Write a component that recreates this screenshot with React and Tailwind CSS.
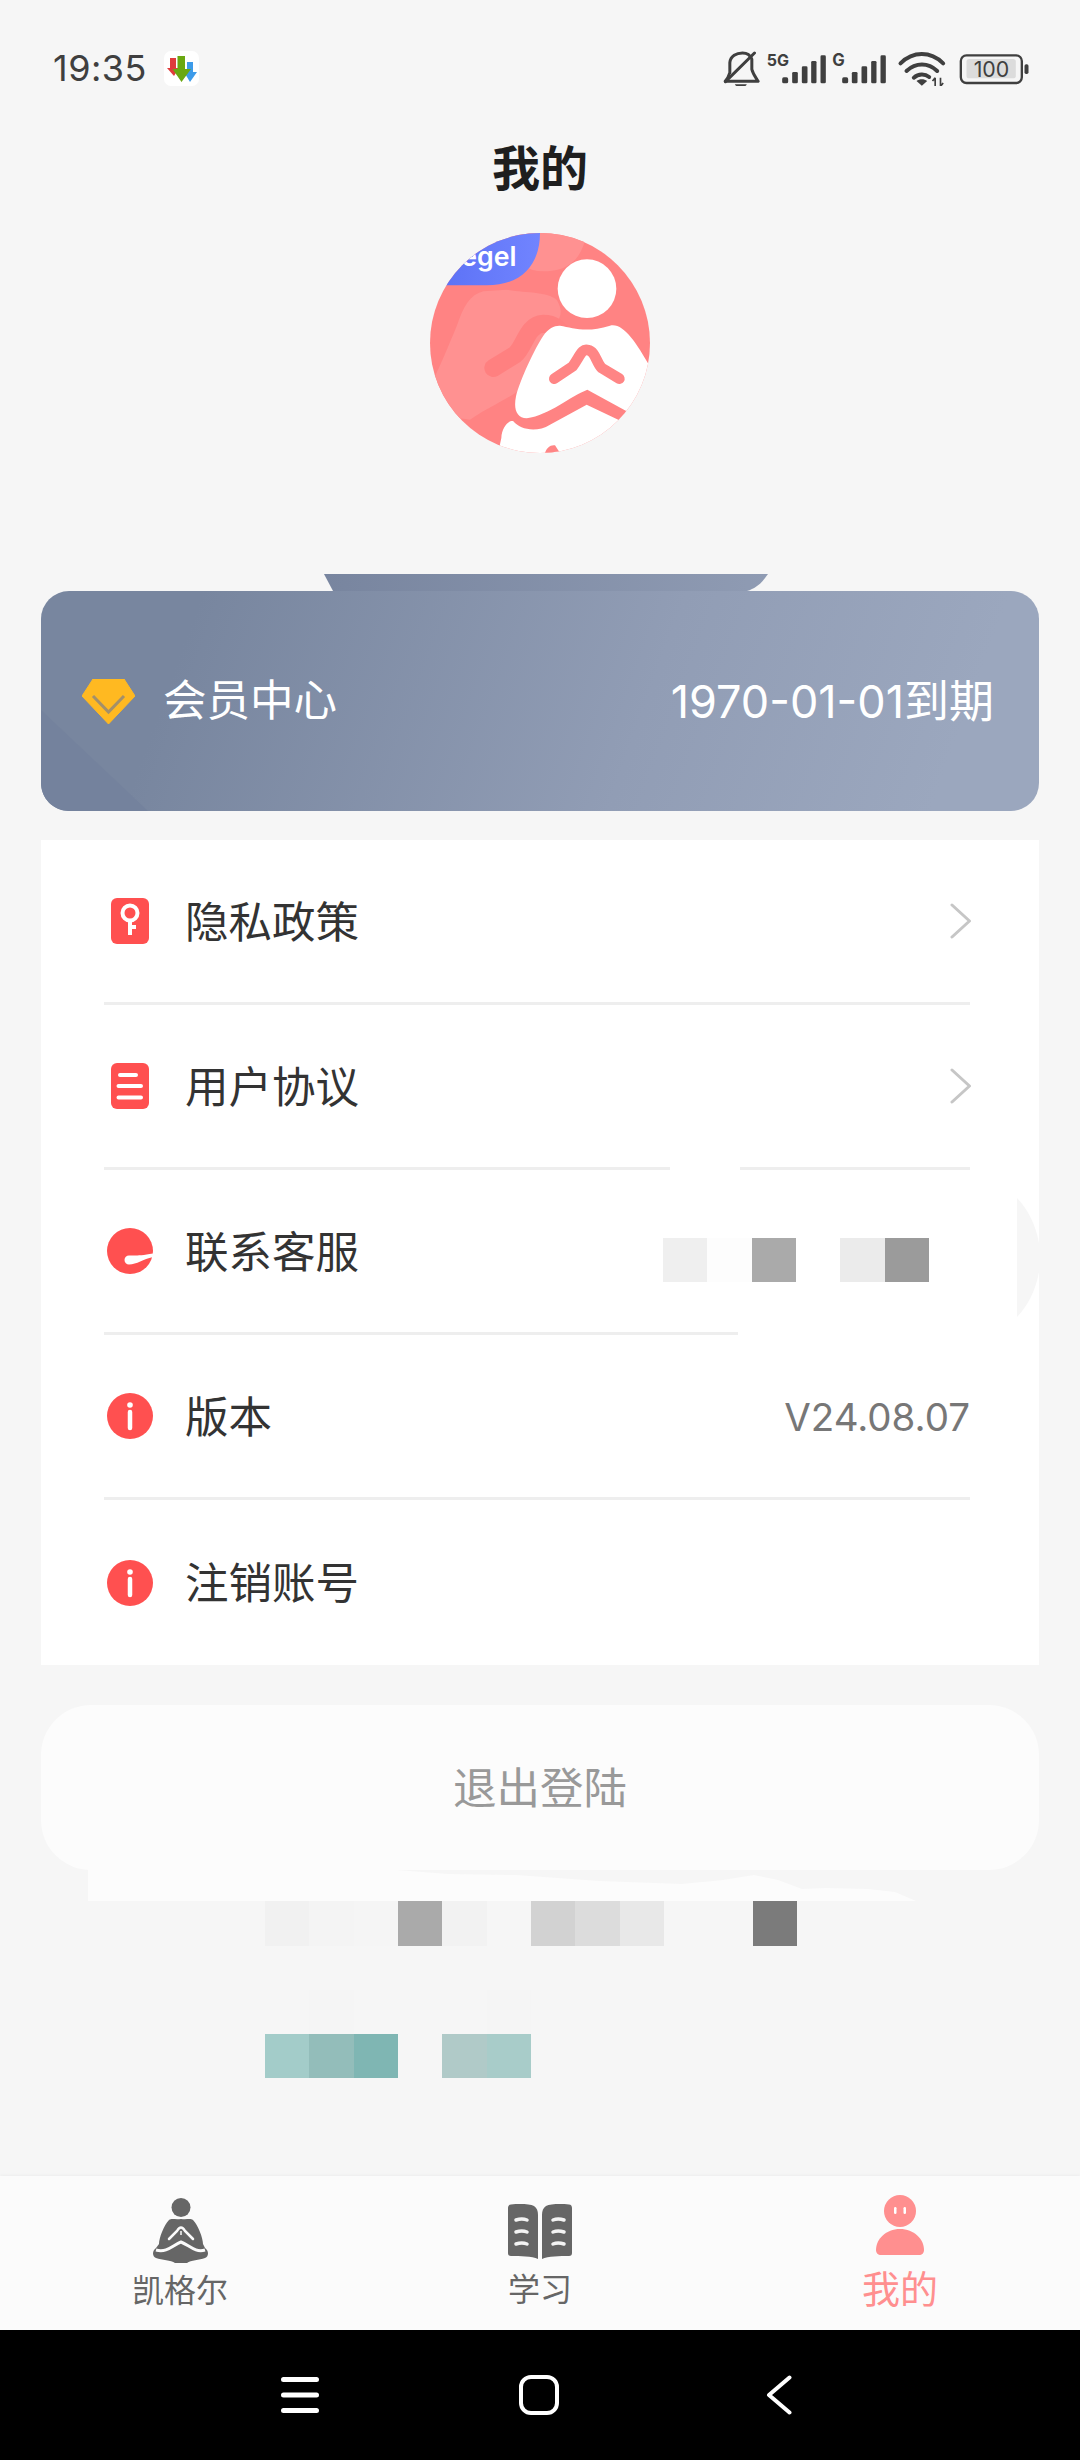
const RED = "#ff5050"
const PAGE = "#f6f6f6"

function StatusIcons() {
  return (
    <svg width="307" height="35" viewBox="130 60 920 105" className="mt-[1px]">
      {/* bell off */}
      <g fill="none" stroke="#3f3f3f" strokeWidth="9" strokeLinecap="round" strokeLinejoin="round">
        <path d="M150 125 V95 C152 75 170 66 188 66 C202 66 212 74 216 85 V115 C220 130 228 140 235 151 H136 C142 145 147 135 150 125" />
        <path d="M137 152 L224 66" />
      </g>
      <path d="M165 160 H201 C197 171 169 171 165 160Z" fill="#3f3f3f" />
      {/* signal one */}
      <text x="261" y="105" fontSize="48" fontWeight="700" fill="#3f3f3f">5G</text>
      <g fill="#3f3f3f">
        <rect x="307" y="139" width="18" height="18" rx="5" />
        <rect x="337" y="123" width="17" height="34" rx="4" />
        <rect x="366" y="106" width="17" height="51" rx="4" />
        <rect x="394" y="90" width="16" height="67" rx="4" />
        <rect x="422" y="73" width="16" height="84" rx="4" />
      </g>
      {/* signal two */}
      <text x="457" y="105" fontSize="50" fontWeight="700" fill="#3f3f3f">G</text>
      <g fill="#3f3f3f">
        <rect x="487" y="139" width="18" height="18" rx="5" />
        <rect x="516" y="123" width="17" height="34" rx="4" />
        <rect x="545" y="106" width="17" height="51" rx="4" />
        <rect x="574" y="90" width="16" height="67" rx="4" />
        <rect x="602" y="73" width="16" height="84" rx="4" />
      </g>
      {/* wifi */}
      <g fill="none" stroke="#3f3f3f" strokeWidth="12" strokeLinecap="round">
        <path d="M662 97 C700 60 752 60 790 97" />
        <path d="M680 120 C708 94 745 94 772 120" />
        <path d="M702 140 C716 128 735 128 748 138" />
      </g>
      <path d="M710 150 L726 164 L742 150 C733 143 719 143 710 150Z" fill="#3f3f3f" />
      <path d="M766 140 L766 166 M758 150 L766 140 M782 140 L782 166 M790 156 L782 166" stroke="#3f3f3f" strokeWidth="5" fill="none" />
      {/* battery */}
      <rect x="843" y="73" width="183" height="83" rx="17" fill="none" stroke="#3f3f3f" strokeWidth="7" />
      <rect x="860" y="84" width="148" height="58" rx="8" fill="#dcdcdc" />
      <text x="935" y="139" fontSize="64" fill="#3f3f3f" textAnchor="middle">100</text>
      <rect x="1034" y="100" width="12" height="29" rx="5" fill="#3f3f3f" />
    </svg>
  )
}

function Avatar() {
  return (
    <svg width="220" height="220" viewBox="150 100 660 660" className="mx-auto mt-[15px] block">
      <defs>
        <clipPath id="avatar-clip">
          <circle cx="480" cy="430" r="330" />
        </clipPath>
        <linearGradient id="badge-blue" x1="0" y1="0" x2="1" y2="0">
          <stop offset="0" stopColor="#5a70f5" />
          <stop offset="1" stopColor="#7184ff" />
        </linearGradient>
      </defs>
      <g clipPath="url(#avatar-clip)">
        <rect x="150" y="100" width="660" height="660" fill="#ff8383" />
        <path d="M480 100 H620 C610 150 590 215 490 215 C440 215 420 190 390 160 L400 100Z" fill="#ff9191" />
        <path d="M310 275 C270 285 250 320 230 380 C205 440 180 500 165 530 L200 650 L270 660 C330 620 380 600 420 570 C440 500 470 450 490 410 C530 370 560 350 530 300 C500 275 440 280 380 270Z" fill="#ff9191" />
        <path d="M340 505 L405 465 C435 440 440 375 490 372 C530 372 540 395 560 420" fill="none" stroke="#ff8080" strokeWidth="54" strokeLinecap="round" />
        <path d="M150 100 H480 C480 190 430 257 320 257 H200 L150 300Z" fill="url(#badge-blue)" />
        <text x="244" y="200" fontSize="80" fontWeight="600" fill="#ffffff">egel</text>
        <circle cx="621" cy="267" r="88" fill="#ffffff" />
        <path d="M540 378 C580 385 620 400 690 378 C730 368 770 430 815 510 V600 L740 635 L622 570 C570 590 510 645 440 656 C410 655 400 630 408 590 C420 540 465 445 490 408 C505 385 525 377 540 378Z" fill="#ffffff" />
        <path d="M523 537 L578 500 C600 470 605 445 625 452 C645 455 650 490 665 505 L718 537" fill="none" stroke="#ff8585" strokeWidth="32" strokeLinecap="round" strokeLinejoin="round" />
        <path d="M364 715 C365 685 385 660 400 665 C420 690 470 700 510 675 L620 615 L740 672 L760 780 H350Z" fill="#ffffff" />
        <path d="M495 760 C500 745 510 735 525 737 L540 760Z" fill="#ff8585" />
      </g>
    </svg>
  )
}

function KeyIcon() {
  return (
    <svg width="38" height="46" viewBox="0 0 38 46">
      <rect width="38" height="46" rx="6" fill={RED} />
      <circle cx="19" cy="15" r="7.5" fill="none" stroke="#ffffff" strokeWidth="4" />
      <path d="M19 22 V37 M19 29 H25" stroke="#ffffff" strokeWidth="4" fill="none" />
    </svg>
  )
}

function DocIcon() {
  return (
    <svg width="38" height="46" viewBox="0 0 38 46">
      <rect width="38" height="46" rx="6" fill={RED} />
      <path d="M9 12 H25 M7.5 23 H30 M7.5 34.500 H30" stroke="#ffffff" strokeWidth="4" strokeLinecap="round" fill="none" />
    </svg>
  )
}

function ServiceIcon() {
  return (
    <svg width="46" height="46" viewBox="0 0 46 46">
      <circle cx="23" cy="23" r="23" fill={RED} />
      <path d="M22 27.500 C27 27.500 33 28 46 25.500 V29 C36 31 30 36.500 22 36.500 A4.500 4.500 0 0 1 22 27.500Z" fill="#ffffff" />
    </svg>
  )
}

function InfoIcon() {
  return (
    <svg width="46" height="46" viewBox="0 0 46 46">
      <circle cx="23" cy="23" r="23" fill={RED} />
      <circle cx="23" cy="12" r="2.800" fill="#ffffff" />
      <path d="M23 19 V35" stroke="#ffffff" strokeWidth="4.500" strokeLinecap="round" />
    </svg>
  )
}

function Chevron() {
  return (
    <svg width="22" height="36" viewBox="0 0 22 36" className="absolute right-[67px]">
      <path d="M2 2 L19.500 18 L2 34" fill="none" stroke="#c6c6c6" strokeWidth="3" strokeLinecap="round" strokeLinejoin="round" />
    </svg>
  )
}

function MeditateIcon() {
  return (
    <svg width="55" height="66" viewBox="0 0 55 66">
      <circle cx="28" cy="9.500" r="9.500" fill="#666666" />
      <path d="M28 21 C34 22 37 20 40 22 C45 27 50 40 50 46 L52 50 C56 53 56 58 52 60 C46 62 38 62 34 65 H22 C18 62 9 62 3 60 C-1 58 -1 53 3 50 L6 46 C6 40 11 27 16 22 C19 20 22 22 28 21Z" fill="#666666" />
      <path d="M3 52 C14 55 20 47 28 44 C36 47 42 55 52 52" fill="none" stroke="#fbfbfb" strokeWidth="3" />
      <path d="M16 41 L24 33 Q28 26 32 33 L40 41" fill="none" stroke="#fbfbfb" strokeWidth="2.500" strokeLinecap="round" />
      <path d="M28 33 V37" stroke="#fbfbfb" strokeWidth="1.500" />
    </svg>
  )
}

function BookIcon() {
  return (
    <svg width="64" height="56" viewBox="0 0 64 56">
      <path d="M3 0.500 C12 -0.500 22 0 26 2 C29 4 30 7 30 11 V55 C24 52 12 52 3 52 C1 52 0 51 0 49 V4 C0 2 1 0.700 3 0.500Z" fill="#666666" />
      <path d="M61 0.500 C52 -0.500 42 0 38 2 C35 4 34 7 34 11 V55 C40 52 52 52 61 52 C63 52 64 51 64 49 V4 C64 2 63 0.700 61 0.500Z" fill="#666666" />
      <g fill="none" stroke="#f4f4f4" strokeWidth="3.500" strokeLinecap="round">
        <path d="M8 16 Q14 14 19 16 M8 28 Q14 26 19 28 M8 40 Q14 38 19 40" />
        <path d="M45 16 Q50 14 56 16 M45 28 Q50 26 56 28 M45 40 Q50 38 56 40" />
      </g>
    </svg>
  )
}

function MeIcon() {
  return (
    <svg width="48" height="60" viewBox="0 0 48 60">
      <circle cx="24" cy="16" r="16" fill="#ff8f8f" />
      <rect x="18" y="12" width="2.500" height="7" rx="1.200" fill="#ffffff" />
      <rect x="27.500" y="12" width="2.500" height="7" rx="1.200" fill="#ffffff" />
      <path d="M24 34 C38 34 48 44 48 55 C48 58 46 60 43 60 H5 C2 60 0 58 0 55 C0 44 10 34 24 34Z" fill="#ff8f8f" />
    </svg>
  )
}

const rows = [
  { label: "隐私政策", icon: KeyIcon, chevron: true },
  { label: "用户协议", icon: DocIcon, chevron: true },
  { label: "联系客服", icon: ServiceIcon },
  { label: "版本", icon: InfoIcon, value: "V24.08.07" },
  { label: "注销账号", icon: InfoIcon, last: true },
]

const mosaicTop = ["#f1f1f1", "#f4f4f4", "#f5f5f5", "#aaaaaa", "#f2f2f2", PAGE, "#d2d2d2", "#dcdcdc", "#e8e8e8", PAGE, PAGE, "#7b7b7b"]
const mosaicFaint = [PAGE, "#f5f5f5", PAGE, PAGE, PAGE, "#f5f5f5"]
const mosaicBottom = ["#a3ccc9", "#93bdba", "#7fb6b3", PAGE, "#b0cac8", "#a8ccc9"]
const mosaicService = ["#efefef", "#fdfdfd", "#aaaaaa", "#ffffff", "#ebebeb", "#9b9b9b"]

function MosaicRow({ colors, className = "" }) {
  return (
    <div className={`flex ${className}`}>
      {colors.map((color, i) => (
        <div key={i} className="h-full w-[44.33px]" style={{ backgroundColor: color }} />
      ))}
    </div>
  )
}

function MenuList() {
  return (
    <section className="relative mx-[41px] mt-[29px] w-[998px] bg-white">
      {rows.map(({ label, icon: Icon, chevron, value, last }) => (
        <div key={label}>
          <div className={`relative flex items-center pl-[66px] pr-[69px] ${last ? "h-[165px]" : "h-[162px]"}`}>
            <div className="flex w-[46px] justify-center">
              <Icon />
            </div>
            <span className="ml-[32px] pt-[3px] text-[43.5px] leading-none text-[#333333]">{label}</span>
            {value && <span className="ml-auto pt-[2px] text-[38.5px] leading-none text-[#777777]">{value}</span>}
            {chevron && <Chevron />}
          </div>
          {!last && <div className="ml-[63px] mr-[69px] h-[3px] bg-[#eeeeee]" />}
        </div>
      ))}

      {/* erased patch over the customer service row */}
      <div className="absolute left-[629px] top-[327px] h-[3px] w-[70px] bg-white" />
      <div className="absolute left-[697px] top-[492px] h-[3px] w-[233px] bg-white" />
      <MosaicRow colors={mosaicService} className="absolute left-[622px] top-[398px] h-[44px]" />
      <svg width="22" height="119" viewBox="0 0 22 119" className="absolute right-0 top-[358px]">
        <path d="M0 0 Q17 18 22 45 V74 Q17 101 0 119Z" fill={PAGE} />
      </svg>
    </section>
  )
}

export default function App() {
  return (
    <div className="flex h-[2460px] w-[1080px] flex-col overflow-hidden bg-[#f6f6f6] font-['Inter','Noto_Sans_CJK_SC',sans-serif]">
      {/* status bar */}
      <header className="flex h-[118px] items-start justify-between pl-[53px] pr-[50px] pt-[50px]">
        <div className="flex items-center gap-[17px]">
          <span className="text-[36px] leading-[36px] tracking-[0.5px] text-[#3f3f3f]">19:35</span>
          <svg width="35" height="35" viewBox="0 0 35 35">
            <rect width="35" height="35" rx="7" fill="#ffffff" />
            <path d="M6 7 H12 V17 H15 L10 25 L3 17 H6Z" fill="#e03c3c" />
            <path d="M23 11 H29 V21 H33 L26 31 L20 21 H23Z" fill="#3d9be9" />
            <path d="M13.500 5 H21 V18 H27 L17.500 31 L8.500 18 H13.500Z" fill="#6aa811" />
          </svg>
        </div>
        <StatusIcons />
      </header>

      <h1 className="flex h-[100px] items-center justify-center pt-[2px] text-[48px] font-bold leading-none text-[#1f1f1f]">我的</h1>

      <Avatar />

      {/* member card */}
      <section className="relative mx-[41px] mt-[138px] flex h-[220px] w-[998px] items-center justify-between overflow-visible rounded-[28px] bg-[linear-gradient(110deg,#78869f_15%,#919db5_60%,#9ba7be_90%)] pl-[41px] pr-[45px]">
        <svg width="444" height="17" viewBox="0 0 444 17" className="absolute left-[283px] top-[-17px]">
          <defs>
            <linearGradient id="bump" x1="0" y1="0" x2="1" y2="0">
              <stop offset="0" stopColor="#78859f" />
              <stop offset="1" stopColor="#8f9bb3" />
            </linearGradient>
          </defs>
          <path d="M0 0 H444 C438 9 432 14 423 17 H9 Z" fill="url(#bump)" />
        </svg>
        <svg width="107" height="101" viewBox="0 0 107 101" className="absolute bottom-0 left-0">
          <path d="M0 0 L107 101 H28 C12 101 0 88 0 73Z" fill="#74829d" />
        </svg>
        <div className="relative flex items-center gap-[28px]">
          <svg width="53" height="45" viewBox="0 0 53 45">
            <path d="M11 0 H42 L53 17 L26.500 45 L0 17Z" fill="#ffb921" stroke="#ffb921" strokeWidth="1" strokeLinejoin="round" />
            <path d="M11 17 L26.500 33 L42 17" fill="none" stroke="#a3906a" strokeWidth="3" />
          </svg>
          <span className="text-[43.5px] leading-none text-white">会员中心</span>
        </div>
        <span className="relative text-[45px] leading-none text-white">1970-01-01到期</span>
      </section>

      <MenuList />

      {/* logout */}
      <div className="relative mx-[41px] mt-[40px] w-[998px]">
        <svg width="828" height="34" viewBox="0 0 828 34" className="absolute left-[47px] top-[162px]">
          <path d="M0 0 H270 L360 7 L428 8 L511 14 L594 17 L635 13 L666 8 L690 13 L714 22 L738 21 L780 22 L807 25 L828 34 H0Z" fill="#fcfcfc" />
        </svg>
        <button className="relative flex h-[165px] w-full items-center justify-center rounded-[50px] bg-[#fcfcfc] pt-[2px] text-[43.5px] leading-none text-[#999999]">
          退出登陆
        </button>
      </div>

      {/* blurred footer text */}
      <div className="ml-[265px] mt-[31px]">
        <MosaicRow colors={mosaicTop} className="h-[45px]" />
        <MosaicRow colors={mosaicFaint} className="mt-[44px] h-[44px]" />
        <MosaicRow colors={mosaicBottom} className="h-[44px]" />
      </div>

      {/* tab bar */}
      <nav className="mt-auto grid h-[154px] grid-cols-3 bg-[#fbfbfb] shadow-[0_-1px_3px_rgba(0,0,0,0.04)]">
        <div className="flex flex-col items-center pt-[22px] text-[#666666]">
          <MeditateIcon />
          <span className="mt-[11px] text-[32px] leading-none">凯格尔</span>
        </div>
        <div className="flex flex-col items-center pt-[28px] text-[#666666]">
          <BookIcon />
          <span className="mt-[14px] text-[32px] leading-none">学习</span>
        </div>
        <div className="flex flex-col items-center pt-[19px] text-[#ff8f8f]">
          <MeIcon />
          <span className="mt-[15px] text-[38px] leading-none">我的</span>
        </div>
      </nav>

      {/* system navigation */}
      <footer className="relative flex h-[130px] items-start bg-black pt-[45px]">
        <svg width="38" height="40" viewBox="0 0 38 40" className="ml-[281px]">
          <path d="M2.500 4.500 H35.500 M2.500 20 H35.500 M2.500 35.500 H35.500" stroke="#ffffff" strokeWidth="5" strokeLinecap="round" />
        </svg>
        <svg width="40" height="40" viewBox="0 0 40 40" className="ml-[200px]">
          <rect x="2" y="2" width="36" height="36" rx="10" fill="none" stroke="#ffffff" strokeWidth="4" />
        </svg>
        <svg width="26" height="40" viewBox="0 0 26 40" className="ml-[207px]">
          <path d="M23.500 2.500 L3 20 L23.500 37.500" fill="none" stroke="#ffffff" strokeWidth="4" strokeLinecap="round" strokeLinejoin="round" />
        </svg>
      </footer>
    </div>
  )
}
